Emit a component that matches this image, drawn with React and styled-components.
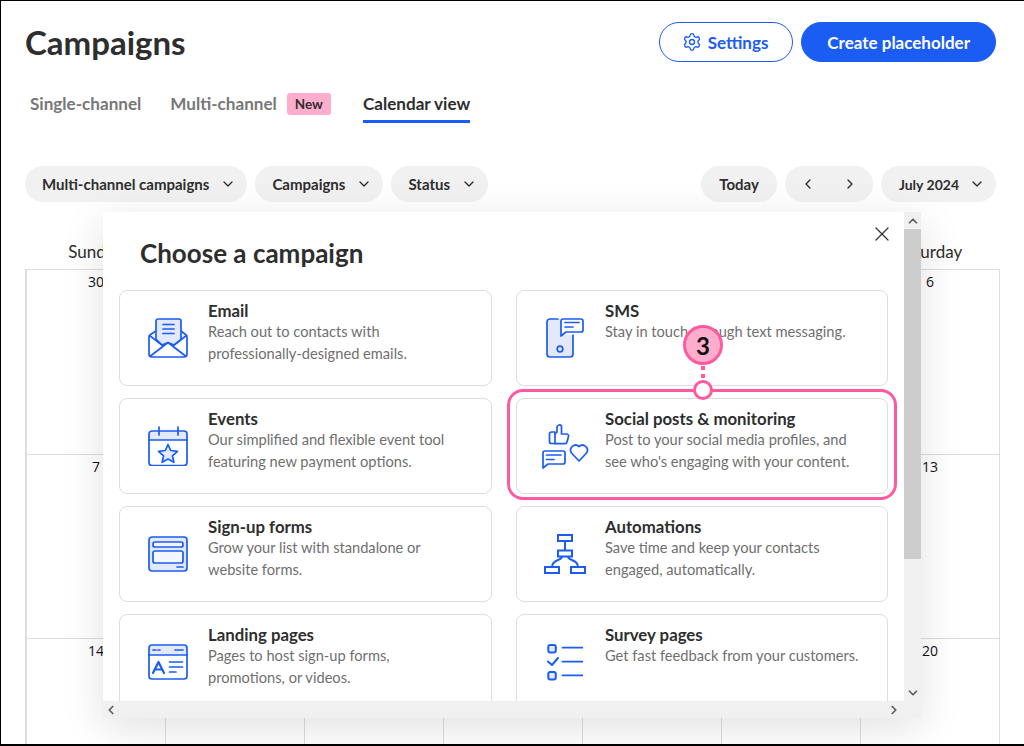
import React from "react";
import styled, { createGlobalStyle } from "styled-components";
import { ChevronDown, ChevronLeft, ChevronRight, ChevronUp, X, Settings as SettingsIcon } from "lucide-react";

const BLUE = "#1b5cf3";
const TINT = "#e3e9fb";
const PINK = "#ff5a9f";

const GlobalStyle = createGlobalStyle`
  html, body { margin: 0; padding: 0; background: #fff; }
  * { box-sizing: border-box; }
  body { font-family: "Lato", "Liberation Sans", sans-serif; color: #2e2e2e; }
`;

const Page = styled.div`
  position: relative;
  width: 1024px;
  height: 746px;
  overflow: hidden;
  border: 1px solid #000;
  border-bottom-width: 2px;
  border-right-width: 0;
  padding: 21px 28px 0 24px;
`;

const Header = styled.header`
  display: flex;
  align-items: center;
  justify-content: space-between;
  height: 40px;
`;

const PageTitle = styled.h1`
  margin: 0;
  font-size: 33px;
  font-weight: 700;
  color: #2e2e2e;
`;

const HeaderActions = styled.div`
  display: flex;
  gap: 8px;
`;

const PrimaryButton = styled.button`
  height: 40px;
  padding: ${({ $outline }) => ($outline ? "0 24px 0 22px" : "0 25px")};
  border-radius: 20px;
  border: 1px solid ${BLUE};
  background: ${({ $outline }) => ($outline ? "#fff" : BLUE)};
  color: ${({ $outline }) => ($outline ? BLUE : "#fff")};
  font: 700 17px "Lato", sans-serif;
  display: flex;
  align-items: center;
  gap: 6px;
`;

const Tabs = styled.nav`
  display: flex;
  align-items: flex-start;
  margin-top: 30px;
  padding-left: 5px;
  height: 40px;
`;

const Tab = styled.div`
  height: 31px;
  margin-right: ${({ $gap }) => $gap}px;
  font-size: 17.1px;
  font-weight: 700;
  line-height: 24px;
  color: ${({ $active }) => ($active ? "#2e2e2e" : "#777")};
  border-bottom: ${({ $active }) => ($active ? `3px solid ${BLUE}` : "none")};
`;

const NewBadge = styled.span`
  height: 22px;
  padding: 0 8px;
  margin: 1px 32px 0 10px;
  border-radius: 3px;
  background: #ffadcd;
  color: #2e2e2e;
  font-size: 13.5px;
  font-weight: 700;
  line-height: 22px;
`;

const FilterRow = styled.div`
  display: flex;
  justify-content: space-between;
  margin-top: 34px;
`;

const PillGroup = styled.div`
  display: flex;
  gap: 8px;
`;

const Pill = styled.div`
  height: 36px;
  padding: 0 ${({ $right }) => $right || 18}px 0 ${({ $left }) => $left || 17}px;
  border-radius: 18px;
  background: #f1f1f1;
  display: flex;
  align-items: center;
  gap: ${({ $gap }) => $gap || 11}px;
  font-size: ${({ $size }) => $size || 15}px;
  font-weight: 700;
  color: #2e2e2e;
`;

const WeekDays = styled.div`
  display: grid;
  grid-template-columns: repeat(7, 139px);
  margin-top: 38px;
  height: 29px;
  padding-left: 1px;
  line-height: 24px;
  text-align: center;
  font-size: 17px;
  color: #2e2e2e;
`;

const CalendarGrid = styled.div`
  display: grid;
  grid-template-columns: repeat(7, 139px);
  grid-auto-rows: 184.5px;
  width: 975px;
  border-top: 1px solid #ddd;
  border-left: 2px solid #ddd;
`;

const DayCell = styled.div`
  border-right: 1px solid #ddd;
  border-bottom: 1px solid #ddd;
  padding-top: 2px;
  text-align: center;
  font: 14px "Open Sans", sans-serif;
  color: #111;
`;

const Modal = styled.section`
  position: absolute;
  left: 102px;
  top: 211px;
  width: 818px;
  height: 506px;
  display: grid;
  grid-template-columns: 1fr 17px;
  grid-template-rows: 1fr 17px;
  background: #fff;
  box-shadow: 0 10px 40px rgba(0, 0, 0, 0.12);
`;

const ModalBody = styled.div`
  position: relative;
  overflow: hidden;
  padding: 24px 16px 0 16px;
`;

const ModalTitle = styled.h2`
  margin: 0 0 20px 21px;
  font-size: 26px;
  line-height: 34px;
  font-weight: 700;
  color: #2e2e2e;
`;

const CloseButton = styled.div`
  position: absolute;
  right: 10px;
  top: 10px;
  color: #333;
  display: flex;
`;

const CardGrid = styled.div`
  display: grid;
  grid-template-columns: 373px 372px;
  grid-auto-rows: 96px;
  column-gap: 24px;
  row-gap: 12px;
`;

const Card = styled.div`
  display: flex;
  border: 1px solid #ddd;
  border-radius: 8px;
  background: #fff;
`;

const CardIcon = styled.div`
  flex: none;
  width: 80px;
  margin-left: 8px;
  display: flex;
  justify-content: center;
  align-items: center;
  color: ${BLUE};
`;

const CardCopy = styled.div`
  padding-top: 9px;
`;

const CardTitle = styled.div`
  font-size: 16.8px;
  font-weight: 700;
  line-height: 21px;
  color: #2e2e2e;
`;

const CardText = styled.div`
  font-size: 14.65px;
  line-height: 22px;
  color: #6f6f6f;
`;

const ScrollColumn = styled.div`
  background: #f0f0f0;
  display: flex;
  flex-direction: column;
  align-items: center;
  color: #5f5f5f;
`;

const ScrollArrow = styled.div`
  height: 17px;
  display: flex;
  align-items: center;
  justify-content: center;
`;

const ScrollThumb = styled.div`
  width: 100%;
  height: 330px;
  background: #cdcdcd;
`;

const Spacer = styled.div`
  flex: 1;
`;

const ScrollBottom = styled.div`
  grid-column: 1 / 3;
  background: #f0f0f0;
  display: flex;
  align-items: center;
  justify-content: space-between;
  padding: 0 20px 0 1px;
  color: #5f5f5f;
`;

const Highlight = styled.div`
  position: absolute;
  left: 506px;
  top: 388px;
  width: 390px;
  height: 111px;
  border: 3px solid ${PINK};
  border-radius: 16px;
`;

const Connector = styled.div`
  position: absolute;
  left: 700px;
  top: 365px;
  width: 4px;
  height: 14px;
  background: repeating-linear-gradient(to bottom, ${PINK} 0 4px, transparent 4px 8px);
`;

const Marker = styled.div`
  position: absolute;
  left: 682px;
  top: 324px;
  width: 40px;
  height: 40px;
  border-radius: 50%;
  border: 3px solid ${PINK};
  background: #ffadcd;
  color: #111;
  font-size: 24px;
  font-weight: 700;
  display: flex;
  align-items: center;
  justify-content: center;
`;

const Anchor = styled.div`
  position: absolute;
  left: 692px;
  top: 379px;
  width: 20px;
  height: 20px;
  border-radius: 50%;
  border: 3px solid ${PINK};
  background: #fff;
`;

const Glyph = ({ w = 40, h = 40, children }) => (
  <svg width={w} height={h} viewBox={`0 0 ${w} ${h}`} fill="none" stroke="currentColor" strokeWidth="1.7" strokeLinecap="round" strokeLinejoin="round">
    {children}
  </svg>
);

const EmailIcon = () => (
  <Glyph>
    <path d="M8 13L2.5 16.5Q1 17.5 1 19V36a3 3 0 0 0 3 3H36a3 3 0 0 0 3-3V19Q39 17.5 37.5 16.5L33 13" />
    <path d="M1.5 17.5L14 27M38.5 17.5L26 27M2.5 38L20 24.5L37.5 38" />
    <path d="M8 21.5V3a2 2 0 0 1 2-2H31a2 2 0 0 1 2 2V21.5L26 27L20 24.5L14 27Z" fill={TINT} />
    <path d="M15 6.5H26M15 11H26M15 15.5H26" />
  </Glyph>
);

const EventsIcon = () => (
  <Glyph>
    <path d="M1 14V8a3 3 0 0 1 3-3H36a3 3 0 0 1 3 3V14Z" fill={TINT} />
    <path d="M1 14V36.5a3 3 0 0 0 3 3H36a3 3 0 0 0 3-3V14" />
    <path d="M11 1V9M30 1V9" />
    <path d="M20 18.5L22.7 24.5L29.5 25.3L24.4 29.8L25.9 36.3L20 33L14.1 36.3L15.6 29.8L10.5 25.3L17.3 24.5Z" fill={TINT} />
  </Glyph>
);

const FormsIcon = () => (
  <Glyph h={36}>
    <rect x="1" y="1" width="38" height="34" rx="3" fill={TINT} />
    <rect x="5" y="6" width="30" height="5" rx="2" fill="#f4f6fe" />
    <rect x="5" y="15" width="30" height="12" rx="2" fill="#f4f6fe" />
    <path d="M29 31H35" />
  </Glyph>
);

const LandingIcon = () => (
  <Glyph h={36}>
    <path d="M1 11V4a3 3 0 0 1 3-3H36a3 3 0 0 1 3 3V11Z" fill={TINT} />
    <path d="M1 11V32a3 3 0 0 0 3 3H36a3 3 0 0 0 3-3V11" />
    <path d="M5 6H8M10 6H12M27 6H35M21.5 18H34.5M21.5 23H34.5M21.5 28H28" />
    <path d="M5 29L10.5 18L16 29M7 25.5H14" strokeWidth="2.2" />
  </Glyph>
);

const SmsIcon = () => (
  <Glyph w={38}>
    <path d="M12 1H4a3 3 0 0 0-3 3V36a3 3 0 0 0 3 3H24a3 3 0 0 0 3-3V17H15V1Z" fill={TINT} stroke="none" />
    <path d="M12 1H4a3 3 0 0 0-3 3V36a3 3 0 0 0 3 3H24a3 3 0 0 0 3-3V17" />
    <path d="M15 3a2 2 0 0 1 2-2H35a2 2 0 0 1 2 2V12a2 2 0 0 1-2 2H20L15 18Z" fill="#fff" />
    <path d="M19 4.5H33M19 9H27" />
    <circle cx="14" cy="31" r="2.8" />
  </Glyph>
);

const SocialIcon = () => (
  <Glyph w={47} h={45}>
    <path d="M13 8H9.5a2 2 0 0 0-2 2V17.5a2 2 0 0 0 2 2H13Z" />
    <path d="M13 10L15 8V3a2.5 2.5 0 0 1 4.5-1V10H24.5a2 2 0 0 1 2 2.5L25 18a2 2 0 0 1-2 1.7H13" />
    <path d="M1 29a2 2 0 0 1 2-2H21a2 2 0 0 1 2 2V38a2 2 0 0 1-2 2H6L1 44Z" />
    <path d="M4.5 31H19M4.5 35.5H12" />
    <path d="M37 37L29.5 29a5 5 0 0 1 7.5-6.5a5 5 0 0 1 7.5 6.5Z" />
  </Glyph>
);

const AutomationIcon = () => (
  <Glyph w={42}>
    <g strokeWidth="2" strokeLinecap="butt" strokeLinejoin="miter">
      <rect x="14" y="1" width="14" height="6" />
      <rect x="14" y="16.5" width="14" height="6" />
      <rect x="1" y="33" width="14" height="6" />
      <rect x="27" y="33" width="14" height="6" />
      <path d="M21 7V16.5M18 22.5C18 27 8 25 8 33M24 22.5C24 27 34 25 34 33" />
    </g>
  </Glyph>
);

const SurveyIcon = () => (
  <Glyph w={36} h={38}>
    <rect x="1.3" y="2" width="7.5" height="7.5" rx="2" fill={TINT} strokeWidth="2" />
    <rect x="1.3" y="29" width="7.5" height="7.5" rx="2" fill={TINT} strokeWidth="2" />
    <path d="M1 18.5L5 22L11 15" strokeWidth="2" />
    <path d="M15.5 4.7H35.5M15.5 18.7H35.5M15.5 32.3H35.5" />
  </Glyph>
);

const CARDS = [
  { id: "email", title: "Email", text: ["Reach out to contacts with", "professionally-designed emails."], icon: <EmailIcon /> },
  { id: "sms", title: "SMS", text: ["Stay in touch through text messaging."], icon: <SmsIcon /> },
  { id: "events", title: "Events", text: ["Our simplified and flexible event tool", "featuring new payment options."], icon: <EventsIcon /> },
  { id: "social", title: "Social posts & monitoring", text: ["Post to your social media profiles, and", "see who's engaging with your content."], icon: <SocialIcon /> },
  { id: "forms", title: "Sign-up forms", text: ["Grow your list with standalone or", "website forms."], icon: <FormsIcon /> },
  { id: "auto", title: "Automations", text: ["Save time and keep your contacts", "engaged, automatically."], icon: <AutomationIcon /> },
  { id: "landing", title: "Landing pages", text: ["Pages to host sign-up forms,", "promotions, or videos."], icon: <LandingIcon /> },
  { id: "survey", title: "Survey pages", text: ["Get fast feedback from your customers."], icon: <SurveyIcon /> },
];

const WEEK = ["Sunday", "Monday", "Tuesday", "Wednesday", "Thursday", "Friday", "Saturday"];
const DAYS = [30, 1, 2, 3, 4, 5, 6, 7, 8, 9, 10, 11, 12, 13, 14, 15, 16, 17, 18, 19, 20];

export default function App() {
  return (
    <Page>
      <GlobalStyle />
      <Header>
        <PageTitle>Campaigns</PageTitle>
        <HeaderActions>
          <PrimaryButton $outline>
            <SettingsIcon size={20} strokeWidth={1.6} />
            Settings
          </PrimaryButton>
          <PrimaryButton>Create placeholder</PrimaryButton>
        </HeaderActions>
      </Header>
      <Tabs>
        <Tab $gap={29}>Single-channel</Tab>
        <Tab $gap={0}>Multi-channel</Tab>
        <NewBadge>New</NewBadge>
        <Tab $active $gap={0}>Calendar view</Tab>
      </Tabs>
      <FilterRow>
        <PillGroup>
          <Pill $right={11}>Multi-channel campaigns <ChevronDown size={16} /></Pill>
          <Pill $right={11}>Campaigns <ChevronDown size={16} /></Pill>
          <Pill $right={11}>Status <ChevronDown size={16} /></Pill>
        </PillGroup>
        <PillGroup>
          <Pill $left={18}>Today</Pill>
          <Pill $left={15} $right={15} $gap={26}><ChevronLeft size={16} /><ChevronRight size={16} /></Pill>
          <Pill $left={18} $right={11} $gap={10} $size={14}>July 2024 <ChevronDown size={16} /></Pill>
        </PillGroup>
      </FilterRow>
      <WeekDays>
        {WEEK.map(d => <div key={d}>{d}</div>)}
      </WeekDays>
      <CalendarGrid>
        {DAYS.map(d => <DayCell key={d}>{d}</DayCell>)}
      </CalendarGrid>
      <Modal>
        <ModalBody>
          <CloseButton><X size={24} strokeWidth={1.3} /></CloseButton>
          <ModalTitle>Choose a campaign</ModalTitle>
          <CardGrid>
            {CARDS.map(card => (
              <Card key={card.id}>
                <CardIcon>{card.icon}</CardIcon>
                <CardCopy>
                  <CardTitle>{card.title}</CardTitle>
                  {card.text.map(line => <CardText key={line}>{line}</CardText>)}
                </CardCopy>
              </Card>
            ))}
          </CardGrid>
        </ModalBody>
        <ScrollColumn>
          <ScrollArrow><ChevronUp size={14} strokeWidth={3} /></ScrollArrow>
          <ScrollThumb />
          <Spacer />
          <ScrollArrow><ChevronDown size={14} strokeWidth={3} /></ScrollArrow>
        </ScrollColumn>
        <ScrollBottom>
          <ChevronLeft size={14} strokeWidth={3} />
          <ChevronRight size={14} strokeWidth={3} />
        </ScrollBottom>
      </Modal>
      <Highlight />
      <Connector />
      <Marker>3</Marker>
      <Anchor />
    </Page>
  );
}
